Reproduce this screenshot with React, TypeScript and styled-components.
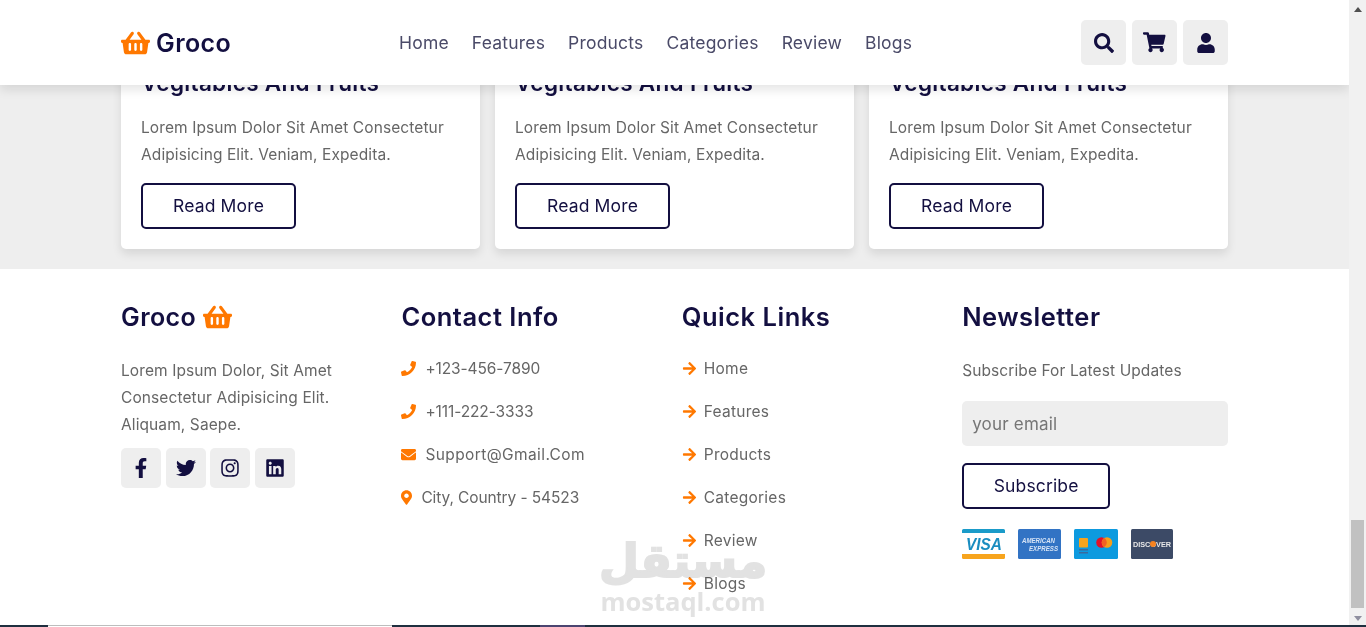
import React from 'react';
import styled, { createGlobalStyle } from 'styled-components';
import {
	FaArrowRight,
	FaEnvelope,
	FaFacebookF,
	FaInstagram,
	FaLinkedin,
	FaMapMarkerAlt,
	FaPhone,
	FaSearch,
	FaShoppingBasket,
	FaShoppingCart,
	FaTwitter,
	FaUser,
} from 'react-icons/fa';

const DARK = '#130f40';
const TEXT = '#666';
const ORANGE = '#ff7800';
const LIGHT = '#eee';

const navLinks = ['Home', 'Features', 'Products', 'Categories', 'Review', 'Blogs'];
const contacts = [
	{ icon: <FaPhone />, iconWidth: 15, spacing: -0.1, label: '+123-456-7890' },
	{ icon: <FaPhone />, iconWidth: 15, spacing: -0.1, label: '+111-222-3333' },
	{ icon: <FaEnvelope />, iconWidth: 15, spacing: 0.4, label: 'Support@Gmail.Com' },
	{ icon: <FaMapMarkerAlt />, iconWidth: 11, spacing: -0.1, label: 'City, Country - 54523' },
];

const GlobalStyle = createGlobalStyle`
	* {
		box-sizing: border-box;
	}
	html, body {
		margin: 0;
		padding: 0;
		overflow: hidden;
		background: #fff;
	}
	body {
		font-family: Inter, "Open Sans", sans-serif;
	}
`;

const VisaCard = () => (
	<svg width="43" height="30" viewBox="0 0 43 30">
		<rect width="43" height="30" rx="1.5" fill="#fff" />
		<path d="M0 4V1.5A1.5 1.5 0 0 1 1.5 0h40A1.5 1.5 0 0 1 43 1.5V4z" fill="#1a9bc9" />
		<path d="M0 25v3.5A1.5 1.5 0 0 0 1.5 30h40a1.5 1.5 0 0 0 1.5-1.5V25z" fill="#f7a41d" />
		<text x="4" y="20.5" fontFamily="Liberation Sans" fontSize="16" fontWeight="700" fontStyle="italic" fill="#1a8dc0" textLength="36" lengthAdjust="spacingAndGlyphs">
			VISA
		</text>
	</svg>
);

const AmexCard = () => (
	<svg width="43" height="30" viewBox="0 0 43 30">
		<rect width="43" height="30" rx="1.5" fill="#3273c4" />
		<text x="4" y="14" fontFamily="Liberation Sans" fontSize="7" fontWeight="700" fontStyle="italic" fill="#d7e4f6" textLength="33" lengthAdjust="spacingAndGlyphs">
			AMERICAN
		</text>
		<text x="11" y="21.5" fontFamily="Liberation Sans" fontSize="7" fontWeight="700" fontStyle="italic" fill="#d7e4f6" textLength="29" lengthAdjust="spacingAndGlyphs">
			EXPRESS
		</text>
	</svg>
);

const MasterCard = () => (
	<svg width="44" height="30" viewBox="0 0 44 30">
		<rect width="44" height="30" rx="1.5" fill="#0d9adf" />
		<rect x="5" y="9" width="9" height="9.5" rx="1" fill="#f7a41d" />
		<rect x="5" y="20" width="9" height="1.5" fill="#3a6a9e" />
		<rect x="5" y="23" width="9" height="1.5" fill="#3a6a9e" />
		<circle cx="27.5" cy="13.5" r="5.3" fill="#e2102a" />
		<circle cx="33" cy="13.5" r="5.3" fill="#f79e1b" />
		<path d="M30.25 9a5.3 5.3 0 0 1 0 9a5.3 5.3 0 0 1 0-9z" fill="#f26122" />
	</svg>
);

const DiscoverCard = () => (
	<svg width="42" height="30" viewBox="0 0 42 30">
		<rect width="42" height="30" rx="1.5" fill="#3c4a66" />
		<text x="2" y="18" fontFamily="Liberation Sans" fontSize="8" fontWeight="700" fill="#e8e8e8" textLength="38" lengthAdjust="spacingAndGlyphs">
			DISCOVER
		</text>
		<circle cx="22" cy="15" r="3" fill="#f58220" />
	</svg>
);

const App = () => {
	return (
		<>
			<GlobalStyle />
			<Page>
				<Body>
					<Main>
						<Header>
							<Logo>
								<FaShoppingBasket />
								Groco
							</Logo>
							<Nav>
								{navLinks.map((link) => (
									<NavLink key={link}>{link}</NavLink>
								))}
							</Nav>
							<HeaderIcons>
								<IconButton $size={45} $icon={20}>
									<FaSearch />
								</IconButton>
								<IconButton $size={45} $icon={22.5}>
									<FaShoppingCart />
								</IconButton>
								<IconButton $size={45} $icon={20}>
									<FaUser />
								</IconButton>
							</HeaderIcons>
						</Header>

						<BlogSection>
							{[0, 1, 2].map((i) => (
								<BlogCard key={i}>
									<BlogTitle>Vegitables And Fruits</BlogTitle>
									<Paragraph>
										Lorem Ipsum Dolor Sit Amet Consectetur
										<br />
										Adipisicing Elit. Veniam, Expedita.
									</Paragraph>
									<OutlineButton $width={155}>Read More</OutlineButton>
								</BlogCard>
							))}
						</BlogSection>

						<Footer>
							<Column>
								<BrandTitle>
									Groco <FaShoppingBasket />
								</BrandTitle>
								<Paragraph>
									Lorem Ipsum Dolor, Sit Amet
									<br />
									Consectetur Adipisicing Elit.
									<br />
									Aliquam, Saepe.
								</Paragraph>
								<Socials>
									<IconButton $size={40} $icon={20}>
										<FaFacebookF />
									</IconButton>
									<IconButton $size={40} $icon={20}>
										<FaTwitter />
									</IconButton>
									<IconButton $size={40} $icon={20}>
										<FaInstagram />
									</IconButton>
									<IconButton $size={40} $icon={20}>
										<FaLinkedin />
									</IconButton>
								</Socials>
							</Column>

							<Column>
								<ColumnTitle>Contact Info</ColumnTitle>
								<LinkList>
									{contacts.map((c) => (
										<LinkRow key={c.label} $iconWidth={c.iconWidth} $gap={9} $spacing={c.spacing}>
											{c.icon}
											{c.label}
										</LinkRow>
									))}
								</LinkList>
							</Column>

							<Column>
								<ColumnTitle>Quick Links</ColumnTitle>
								<LinkList>
									{navLinks.map((link) => (
										<LinkRow key={link} $iconWidth={15} $gap={7} $spacing={0.25}>
											<FaArrowRight />
											{link}
										</LinkRow>
									))}
								</LinkList>
							</Column>

							<Column>
								<ColumnTitle>Newsletter</ColumnTitle>
								<Paragraph>Subscribe For Latest Updates</Paragraph>
								<EmailInput placeholder="your email" />
								<OutlineButton $width={148}>Subscribe</OutlineButton>
								<Payments>
									<VisaCard />
									<AmexCard />
									<MasterCard />
									<DiscoverCard />
								</Payments>
							</Column>
						</Footer>

						<Watermark>
							<WatermarkArabic>مستقل</WatermarkArabic>
							<WatermarkLatin>mostaql.com</WatermarkLatin>
						</Watermark>
					</Main>

					<Scrollbar>
						<ArrowUp />
						<Track>
							<Thumb />
						</Track>
						<ArrowDown />
					</Scrollbar>
				</Body>
				<Strip>
					<StripPart $width={48} $color="#1f2f3f" />
					<StripPart $width={344} $color="#fff" $line />
					<StripPart $width={148} $color="#1f2f3f" />
					<StripPart $width={45} $color="#4b4570" />
					<StripPart $grow $color="#1f2f3f" />
				</Strip>
			</Page>
		</>
	);
};

export default App;

const Page = styled.div`
	width: 1366px;
	height: 627px;
	display: flex;
	flex-direction: column;
	overflow: hidden;
`;

const Body = styled.div`
	flex: 1;
	min-height: 0;
	display: flex;
`;

const Main = styled.main`
	position: relative;
	width: 1349px;
	overflow: hidden;
	background: #fff;
`;

const Header = styled.header`
	position: absolute;
	top: 0;
	left: 0;
	right: 0;
	z-index: 2;
	height: 85px;
	padding: 0 121px;
	display: flex;
	align-items: center;
	background: #fff;
	box-shadow: 0 5px 10px rgba(0, 0, 0, 0.1);
`;

const Logo = styled.a`
	width: 278px;
	display: flex;
	align-items: center;
	gap: 6px;
	font-size: 25px;
	font-weight: 600;
	letter-spacing: 0.4px;
	color: ${DARK};

	svg {
		width: 29px;
		height: 26px;
		color: ${ORANGE};
	}
`;

const Nav = styled.nav`
	display: flex;
	gap: 23px;
`;

const NavLink = styled.a`
	font-size: 17.5px;
	letter-spacing: 0.2px;
	color: #4a4a68;
`;

const HeaderIcons = styled.div`
	margin-left: auto;
	display: flex;
	gap: 6px;
`;

const IconButton = styled.div<{ $size: number; $icon: number }>`
	width: ${(p) => p.$size}px;
	height: ${(p) => p.$size}px;
	display: flex;
	align-items: center;
	justify-content: center;
	background: ${LIGHT};
	border-radius: 5px;
	color: ${DARK};

	svg {
		width: ${(p) => p.$icon}px;
		height: ${(p) => p.$icon}px;
	}
`;

const BlogSection = styled.section`
	height: 269px;
	padding: 0 121px 20px;
	display: grid;
	grid-template-columns: repeat(3, 359px);
	gap: 15px;
	align-items: end;
	overflow: hidden;
	background: ${LIGHT};
`;

const BlogCard = styled.article`
	padding: 0 20px 20px;
	background: #fff;
	border-radius: 5px;
	box-shadow: 0 5px 10px rgba(0, 0, 0, 0.1);
`;

const BlogTitle = styled.h3`
	margin: 0 0 16px;
	font-size: 22.5px;
	line-height: 30px;
	font-weight: 600;
	letter-spacing: 0.3px;
	color: ${DARK};
`;

const Paragraph = styled.p`
	margin: 0 0 15px;
	font-size: 15.5px;
	line-height: 27px;
	letter-spacing: 0.1px;
	color: ${TEXT};
`;

const OutlineButton = styled.button<{ $width: number }>`
	display: block;
	width: ${(p) => p.$width}px;
	height: 46px;
	padding: 0 0 1px;
	font-family: inherit;
	font-size: 17.5px;
	letter-spacing: 0.15px;
	color: ${DARK};
	background: #fff;
	border: 2px solid ${DARK};
	border-radius: 5px;
`;

const Footer = styled.footer`
	padding: 30px 121px 0;
	display: grid;
	grid-template-columns: repeat(4, 1fr);
	gap: 14.5px;
`;

const Column = styled.div`
	min-width: 0;
`;

const ColumnTitle = styled.h3`
	margin: 0 0 21px;
	height: 37px;
	font-size: 25.5px;
	line-height: 36px;
	font-weight: 600;
	letter-spacing: 0.5px;
	color: ${DARK};
`;

const BrandTitle = styled(ColumnTitle)`
	display: flex;
	align-items: center;
	gap: 7px;
	padding-bottom: 1px;
	font-size: 25px;
	letter-spacing: 0.4px;

	svg {
		width: 29px;
		height: 26px;
		color: ${ORANGE};
	}
`;

const Socials = styled.div`
	margin-top: -5px;
	display: flex;
	gap: 4.7px;
`;

const LinkList = styled.div`
	margin-top: -2px;
	display: flex;
	flex-direction: column;
	gap: 17px;
`;

const LinkRow = styled.a<{ $iconWidth: number; $gap: number; $spacing: number }>`
	height: 26px;
	display: flex;
	align-items: center;
	gap: ${(p) => p.$gap}px;
	font-size: 15.5px;
	letter-spacing: ${(p) => p.$spacing}px;
	color: ${TEXT};

	svg {
		width: ${(p) => p.$iconWidth}px;
		height: 15px;
		color: ${ORANGE};
	}
`;

const EmailInput = styled.input`
	display: block;
	width: 100%;
	height: 45px;
	margin: 17px 0 17px;
	padding: 0 10px;
	font-family: inherit;
	font-size: 17px;
	letter-spacing: 0.2px;
	color: ${TEXT};
	background: ${LIGHT};
	border: 0;
	border-radius: 5px;

	&::placeholder {
		color: #757575;
		opacity: 1;
	}
`;

const Payments = styled.div`
	margin-top: 20px;
	display: flex;
	gap: 13px;

	svg {
		display: block;
	}
`;

const Watermark = styled.div`
	position: absolute;
	left: 601px;
	top: 532px;
	width: 164px;
	display: flex;
	flex-direction: column;
	align-items: center;
	color: #e2e2e2;
	mix-blend-mode: multiply;
	pointer-events: none;
`;

const WatermarkArabic = styled.div`
	font-family: 'DejaVu Sans', sans-serif;
	font-size: 46px;
	line-height: 58px;
	font-weight: 700;
	-webkit-text-stroke: 2px #e2e2e2;
`;

const WatermarkLatin = styled.div`
	font-family: 'Open Sans', sans-serif;
	font-size: 25.5px;
	line-height: 22px;
	font-weight: 700;
`;

const Scrollbar = styled.div`
	width: 17px;
	display: flex;
	flex-direction: column;
	align-items: center;
	background: #f1f1f1;
`;

const ArrowUp = styled.div`
	margin-top: 7px;
	border: 4px solid transparent;
	border-top: 0;
	border-bottom: 5px solid #505050;
`;

const Track = styled.div`
	flex: 1;
	width: 100%;
	padding: 0 2px;
	display: flex;
	flex-direction: column;
	justify-content: flex-end;
`;

const Thumb = styled.div`
	height: 88px;
	margin-bottom: 4px;
	background: #c1c1c1;
`;

const ArrowDown = styled.div`
	margin: 4px 0 4px;
	border: 4px solid transparent;
	border-bottom: 0;
	border-top: 5px solid #8f8f9f;
`;

const Strip = styled.div`
	height: 2px;
	display: flex;
	flex: none;
`;

const StripPart = styled.div<{ $width?: number; $color: string; $grow?: boolean; $line?: boolean }>`
	width: ${(p) => (p.$width ? `${p.$width}px` : 'auto')};
	flex: ${(p) => (p.$grow ? 1 : 'none')};
	background: ${(p) => p.$color};
	border-top: ${(p) => (p.$line ? '1px solid #bdbdbd' : '0')};
`;
